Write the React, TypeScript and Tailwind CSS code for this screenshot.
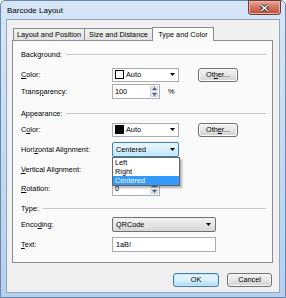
import React from 'react';

const Arrow: React.FC<{ className?: string }> = ({ className }) => (
  <svg width="5" height="3" viewBox="0 0 5 3" className={className}>
    <path d="M0 0H5L2.5 3Z" fill="#000" />
  </svg>
);

const SpinArrow: React.FC<{ up?: boolean }> = ({ up }) => (
  <svg width="5" height="3" viewBox="0 0 5 3">
    <path d={up ? 'M0 3H5L2.5 0Z' : 'M0 0H5L2.5 3Z'} fill="#4d6185" />
  </svg>
);

const ColorCombo: React.FC<{ swatch: string }> = ({ swatch }) => (
  <div className="w-[67px] h-[14px] bg-white border border-[#abadb3] flex items-center pl-[2px] pr-[3px]">
    <span className={`w-[9px] h-[9px] border border-black mr-[2px] ${swatch}`} />
    <span>Auto</span>
    <Arrow className="ml-auto" />
  </div>
);

const Spin: React.FC<{ value: string }> = ({ value }) => (
  <div className="w-[48px] h-[15px] bg-white border border-[#abadb3] flex">
    <span className="flex-1 pl-[2px] flex items-center">{value}</span>
    <div className="w-[10px] flex flex-col gap-px p-px">
      <div className="flex-1 flex items-center justify-center bg-gradient-to-b from-[#f3f6fa] to-[#dbe3ec] border border-[#c5d0dc] rounded-[1px]">
        <SpinArrow up />
      </div>
      <div className="flex-1 flex items-center justify-center bg-gradient-to-b from-[#f3f6fa] to-[#dbe3ec] border border-[#c5d0dc] rounded-[1px]">
        <SpinArrow />
      </div>
    </div>
  </div>
);

const Button: React.FC<{ children: React.ReactNode; w: string; def?: boolean }> = ({ children, w, def }) => (
  <div
    className={`${w} h-[14px] rounded-[3px] border flex items-center justify-center ${
      def
        ? 'border-[#3c7fb1] bg-gradient-to-b from-[#eaf6fd] via-[#d9f0fc] to-[#a7d9f5] shadow-[inset_0_0_0_1px_#c6e6f9]'
        : 'border-[#707070] bg-gradient-to-b from-[#f2f2f2] via-[#e6e6e6] to-[#d0d0d0] shadow-[inset_0_0_0_1px_#fcfcfc]'
    }`}
  >
    {children}
  </div>
);

const Header: React.FC<{ text: string; mt: string }> = ({ text, mt }) => (
  <div className={`flex items-center h-[14px] ${mt}`}>
    <span>{text}</span>
    <div className="flex-1 ml-[4px] border-t border-[#c4c8cc] border-b border-b-white" />
  </div>
);

const Row: React.FC<{ label: React.ReactNode; mt: string; children: React.ReactNode }> = ({ label, mt, children }) => (
  <div className={`flex items-center h-[15px] ${mt}`}>
    <span className="w-[91px] shrink-0">{label}</span>
    {children}
  </div>
);

export default function App() {
  return (
    <div className="w-[286px] h-[298px] font-['Liberation_Sans',Arial,sans-serif] text-[7.3px] leading-none text-black bg-white">
      <div className="w-[286px] h-[298px] rounded-t-[5px] border border-[#6a87ad] bg-gradient-to-b from-[#d6e6f7] via-[#c6dbf2] to-[#b6d0ee] flex flex-col">
        {/* title bar */}
        <div className="h-[18px] flex items-start shrink-0">
          <span className="pl-[6px] pt-[6px] text-[8px]">Barcode Layout</span>
          <div className="ml-auto mr-[4px] -mt-px w-[33px] h-[15px] rounded-b-[3px] border border-[#6e3a36] bg-gradient-to-b from-[#e8a99f] via-[#d3705f] to-[#c4483a] flex items-center justify-center shadow-[inset_0_0_0_1px_#eab3a9]">
            <svg width="9" height="8" viewBox="0 0 9 8">
              <path d="M1 1L8 7M8 1L1 7" stroke="#3b1e1c" strokeWidth="3" />
              <path d="M1 1L8 7M8 1L1 7" stroke="#fff" strokeWidth="1.6" />
            </svg>
          </div>
        </div>

        {/* client area */}
        <div className="mx-[5px] h-[274px] border border-[#8fa6c1] bg-[#f0f0f0] flex flex-col pl-[5px] pr-[6px]">
          {/* tabs */}
          <div className="mt-[7px] h-[13px] flex items-end pl-[1px] relative z-10">
            <div className="w-[72px] h-[12px] border border-b-0 border-[#898c95] bg-gradient-to-b from-[#f2f2f2] to-[#e3e3e3] flex items-center justify-center">
              Layout and Position
            </div>
            <div className="w-[68px] h-[12px] border border-l-0 border-b-0 border-[#898c95] bg-gradient-to-b from-[#f2f2f2] to-[#e3e3e3] flex items-center justify-center">
              Size and Distance
            </div>
            <div className="w-[62px] h-[14px] -mb-px -ml-[1px] border border-b-0 border-[#898c95] bg-[#fafafa] flex items-center justify-center">
              Type and Color
            </div>
          </div>

          {/* panel */}
          <div className="w-[261px] h-[223px] border border-[#898c95] bg-[#fafafa] pl-[8px] pr-[6px] flex flex-col">
            <Header text="Background:" mt="mt-[7px]" />
            <Row mt="mt-[5px]" label={<><u>C</u>olor:</>}>
              <ColorCombo swatch="bg-white" />
              <div className="ml-[19px]">
                <Button w="w-[40px]">
                  Ot<u>h</u>er...
                </Button>
              </div>
            </Row>
            <Row mt="mt-[2px]" label={<>Trans<u>p</u>arency:</>}>
              <Spin value="100" />
              <span className="ml-[8px]">%</span>
            </Row>

            <Header text="Appearance:" mt="mt-[8px]" />
            <Row mt="mt-[1px]" label={<>C<u>o</u>lor:</>}>
              <ColorCombo swatch="bg-black" />
              <div className="ml-[19px]">
                <Button w="w-[40px]">
                  Oth<u>e</u>r...
                </Button>
              </div>
            </Row>
            <Row mt="mt-[5px]" label={<>Hori<u>z</u>ontal Alignment:</>}>
              <div className="relative">
                <div className="w-[67px] h-[15px] rounded-[2px] border border-[#3c7fb1] bg-gradient-to-b from-[#eaf6fd] via-[#d9f0fc] to-[#bee6fd] flex items-center pl-[3px] pr-[3px]">
                  <span>Centered</span>
                  <Arrow className="ml-auto" />
                </div>
                <div className="absolute top-[15px] left-0 z-20 w-[68px] h-[29px] bg-white border border-[#646464] shadow-[2px_2px_2px_rgba(0,0,0,0.3)] flex flex-col">
                  <div className="h-[9px] flex items-center pl-[2px]">Left</div>
                  <div className="h-[9px] flex items-center pl-[2px]">Right</div>
                  <div className="h-[9px] flex items-center pl-[2px] bg-[#3399ff] text-white">Centered</div>
                </div>
              </div>
            </Row>
            <Row mt="mt-[5px]" label={<><u>V</u>ertical Alignment:</>}>
              <div className="w-[67px] h-[15px] bg-white border border-[#abadb3]" />
            </Row>
            <Row mt="mt-[4px]" label={<><u>R</u>otation:</>}>
              <Spin value="0" />
            </Row>

            <Header text="Type:" mt="mt-[6px]" />
            <Row mt="mt-[1px]" label={<>Enco<u>d</u>ing:</>}>
              <div className="w-[104px] h-[15px] rounded-[2px] border border-[#707070] bg-gradient-to-b from-[#f2f2f2] via-[#e6e6e6] to-[#d6d6d6] flex items-center pl-[3px] pr-[4px]">
                <span>QRCode</span>
                <Arrow className="ml-auto" />
              </div>
            </Row>
            <Row mt="mt-[5px]" label={<><u>T</u>ext:</>}>
              <div className="w-[104px] h-[15px] bg-white border border-[#abadb3] flex items-center pl-[3px]">1aB!</div>
            </Row>
          </div>

          {/* buttons */}
          <div className="mt-[10px] flex justify-end gap-[8px] pr-[1px]">
            <Button w="w-[46px]" def>
              OK
            </Button>
            <Button w="w-[45px]">Cancel</Button>
          </div>
        </div>
      </div>
    </div>
  );
}
